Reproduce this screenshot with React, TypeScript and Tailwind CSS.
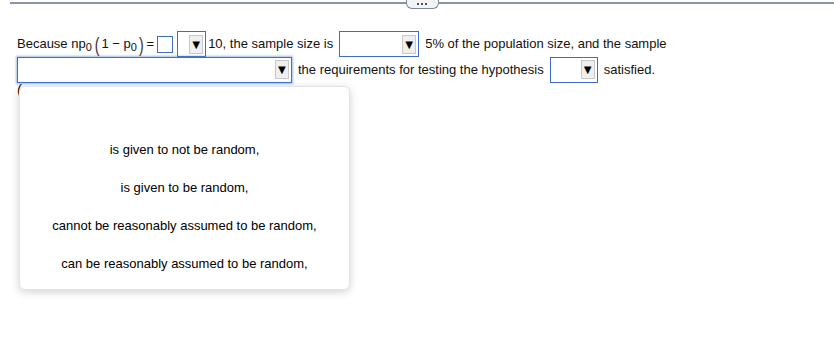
import React from "react"

const font = { fontFamily: '"Liberation Sans", Arial, sans-serif' }

function Select({ width, focused }: { width: number; focused?: boolean }) {
  return (
    <span
      className={`inline-flex h-[26px] shrink-0 items-center justify-end bg-white pr-[2px] border ${
        focused ? "border-[#3b6fd1] shadow-[0_0_2px_1px_rgba(80,130,220,0.55)]" : "border-[#3f6cc8]"
      }`}
      style={{ width }}
    >
      <span className="flex h-[19px] w-[14px] items-center justify-center border border-[#c8c8c8] bg-[#efefef] text-[13px] leading-none text-black">
        ▼
      </span>
    </span>
  )
}

const options = [
  "",
  "is given to not be random,",
  "is given to be random,",
  "cannot be reasonably assumed to be random,",
  "can be reasonably assumed to be random,",
]

export default function App() {
  return (
    <div className="relative h-[344px] w-[834px] overflow-hidden bg-white text-[13px] text-[#111]" style={font}>
      {/* Top divider */}
      <div className="flex items-start pl-[10px]">
        <div className="mt-[2px] h-[2px] flex-1 bg-[#8a94a6]" />
        <div className="flex h-[9px] w-[33px] items-center justify-center gap-[2px] rounded-b-[6px] border border-t-0 border-[#7d8696] bg-[#f3f4f6]">
          <span className="h-[2px] w-[2px] bg-[#4b5563]" />
          <span className="h-[2px] w-[2px] bg-[#4b5563]" />
          <span className="h-[2px] w-[2px] bg-[#4b5563]" />
        </div>
        <div className="mt-[2px] h-[2px] flex-1 bg-[#8a94a6]" />
      </div>

      <div className="pl-[17px] pt-[22px]">
        {/* Line 1 */}
        <div className="flex h-[26px] items-center whitespace-nowrap">
          <span>Because np</span>
          <span className="mt-[7px] text-[11px]">0</span>
          <span className="ml-[3px] inline-block scale-y-[1.5] text-[14px] leading-none text-[#333]">(</span>
          <span className="ml-[2px]">1 − p</span>
          <span className="mt-[7px] text-[11px]">0</span>
          <span className="ml-[2px] inline-block scale-y-[1.5] text-[14px] leading-none text-[#333]">)</span>
          <span className="ml-[3px]">=</span>
          <span className="ml-[3px] h-[17px] w-[16px] border border-[#3f6cc8] bg-white" />
          <span className="ml-[4px] flex">
            <Select width={29} />
          </span>
          <span className="ml-[2px]">10, the sample size is</span>
          <span className="ml-[6px] flex">
            <Select width={80} />
          </span>
          <span className="ml-[6px]">5% of the population size, and the sample</span>
        </div>

        {/* Line 2 */}
        <div className="flex h-[25px] items-center whitespace-nowrap">
          <Select width={275} focused />
          <span className="ml-[6px]">the requirements for testing the hypothesis</span>
          <span className="ml-[6px] flex">
            <Select width={48} />
          </span>
          <span className="ml-[6px]">satisfied.</span>
        </div>

        {/* Line 3 (covered) */}
        <div className="h-[20px] text-[15px] leading-none">(</div>
      </div>

      {/* Dropdown menu */}
      <div className="absolute left-[19px] top-[86px] w-[331px] rounded-[6px] border border-[#e5e5e5] bg-white pb-[6px] pt-[6px] shadow-[0_2px_8px_rgba(0,0,0,0.18)]">
        {options.map((o, i) => (
          <div key={i} className="flex h-[38px] items-center justify-center text-[13px] text-black">
            {o}
          </div>
        ))}
      </div>
    </div>
  )
}
